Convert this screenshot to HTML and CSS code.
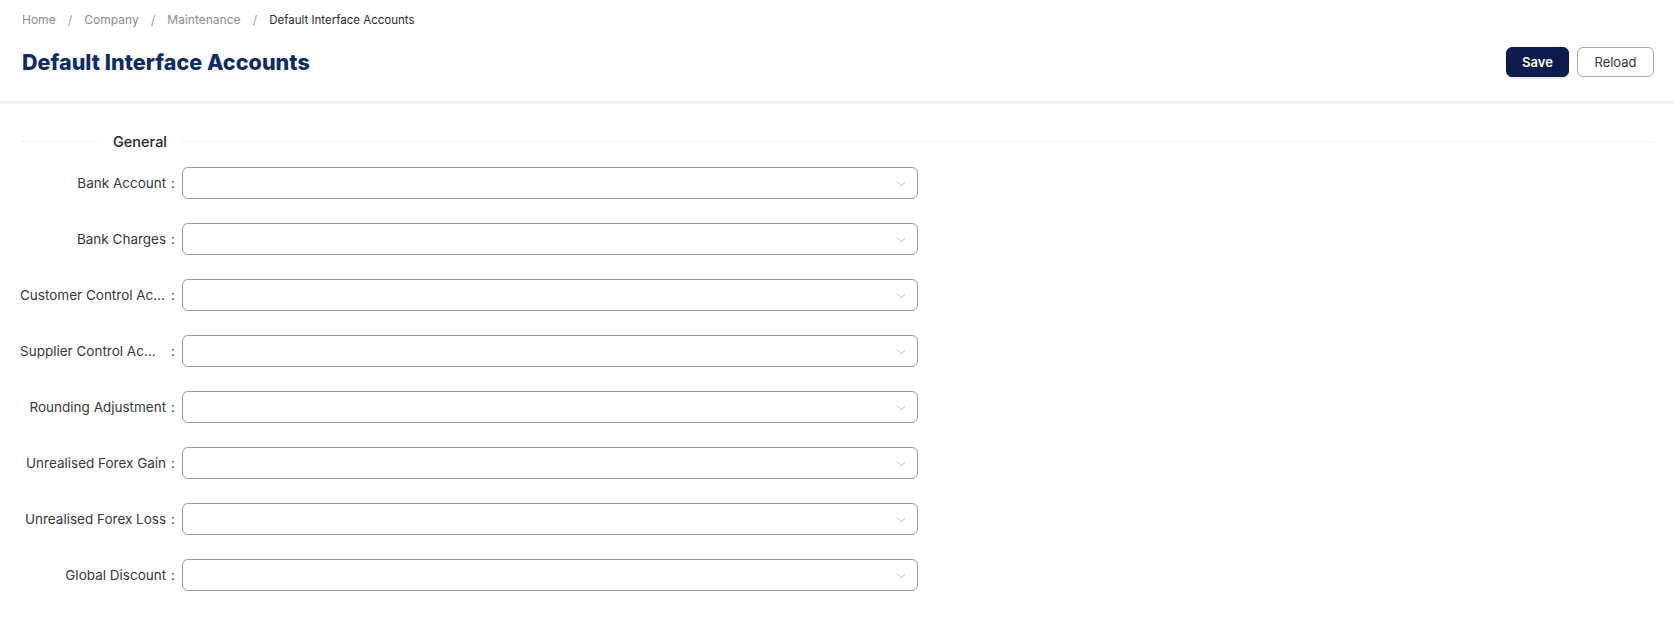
FILE: index.html
```html
<!DOCTYPE html>
<html lang="en">
<head>
<meta charset="utf-8">
<title>Default Interface Accounts</title>
<link rel="stylesheet" href="styles.css">
</head>
<body>
<div class="page">
  <header class="page-header">
    <nav class="breadcrumb">
      <a class="crumb">Home</a><span class="sep">/</span>
      <a class="crumb">Company</a><span class="sep">/</span>
      <a class="crumb">Maintenance</a><span class="sep">/</span>
      <span class="crumb current">Default Interface Accounts</span>
    </nav>
    <div class="title-row">
      <h1 class="title">Default Interface Accounts</h1>
      <div class="actions">
        <button class="btn btn-primary">Save</button>
        <button class="btn btn-default">Reload</button>
      </div>
    </div>
  </header>

  <main class="content">
    <div class="divider">
      <span class="divider-line left"></span>
      <span class="divider-text">General</span>
      <span class="divider-line right"></span>
    </div>

    <form class="form">
      <div class="form-item"><label class="form-label"><span class="label-text">Bank Account</span><span class="colon">:</span></label><div class="select"><span class="arrow"><svg viewBox="0 0 12 12" width="11" height="11"><path d="M1.5 4l4.5 4.5L10.5 4" fill="none" stroke="currentColor" stroke-width="1"/></svg></span></div></div>
      <div class="form-item"><label class="form-label"><span class="label-text">Bank Charges</span><span class="colon">:</span></label><div class="select"><span class="arrow"><svg viewBox="0 0 12 12" width="11" height="11"><path d="M1.5 4l4.5 4.5L10.5 4" fill="none" stroke="currentColor" stroke-width="1"/></svg></span></div></div>
      <div class="form-item"><label class="form-label"><span class="label-text">Customer Control Account</span><span class="colon">:</span></label><div class="select"><span class="arrow"><svg viewBox="0 0 12 12" width="11" height="11"><path d="M1.5 4l4.5 4.5L10.5 4" fill="none" stroke="currentColor" stroke-width="1"/></svg></span></div></div>
      <div class="form-item"><label class="form-label"><span class="label-text">Supplier Control Account</span><span class="colon wide">:</span></label><div class="select"><span class="arrow"><svg viewBox="0 0 12 12" width="11" height="11"><path d="M1.5 4l4.5 4.5L10.5 4" fill="none" stroke="currentColor" stroke-width="1"/></svg></span></div></div>
      <div class="form-item"><label class="form-label"><span class="label-text">Rounding Adjustment</span><span class="colon">:</span></label><div class="select"><span class="arrow"><svg viewBox="0 0 12 12" width="11" height="11"><path d="M1.5 4l4.5 4.5L10.5 4" fill="none" stroke="currentColor" stroke-width="1"/></svg></span></div></div>
      <div class="form-item"><label class="form-label"><span class="label-text">Unrealised Forex Gain</span><span class="colon">:</span></label><div class="select"><span class="arrow"><svg viewBox="0 0 12 12" width="11" height="11"><path d="M1.5 4l4.5 4.5L10.5 4" fill="none" stroke="currentColor" stroke-width="1"/></svg></span></div></div>
      <div class="form-item"><label class="form-label"><span class="label-text">Unrealised Forex Loss</span><span class="colon">:</span></label><div class="select"><span class="arrow"><svg viewBox="0 0 12 12" width="11" height="11"><path d="M1.5 4l4.5 4.5L10.5 4" fill="none" stroke="currentColor" stroke-width="1"/></svg></span></div></div>
      <div class="form-item"><label class="form-label"><span class="label-text">Global Discount</span><span class="colon">:</span></label><div class="select"><span class="arrow"><svg viewBox="0 0 12 12" width="11" height="11"><path d="M1.5 4l4.5 4.5L10.5 4" fill="none" stroke="currentColor" stroke-width="1"/></svg></span></div></div>
    </form>
  </main>
</div>
</body>
</html>
```

FILE: styles.css
```css
* { box-sizing: border-box; }

html, body {
  margin: 0;
  padding: 0;
  background: #ffffff;
  font-family: "Inter", "Open Sans", "Liberation Sans", sans-serif;
  color: #333333;
}

.page-header {
  padding: 9px 20px 0 22px;
  border-bottom: 3px solid #f0f0f0;
}

.breadcrumb {
  display: flex;
  align-items: center;
  height: 22px;
  font-size: 12px;
  line-height: 22px;
}

.crumb {
  color: #8c8c8c;
  text-decoration: none;
}

.crumb.current {
  color: #2b2b2b;
  font-size: 11.5px;
}

.sep {
  color: #a6a6a6;
  margin: 0 12px;
  font-size: 13px;
}

.title-row {
  display: flex;
  align-items: center;
  justify-content: space-between;
  height: 36px;
  margin-top: 13px;
  margin-bottom: 21px;
}

.title {
  margin: 0;
  font-size: 21.5px;
  font-weight: 800;
  color: #0d2b6b;
  letter-spacing: 0.05px;
}

.actions {
  display: flex;
  gap: 8px;
}

.btn {
  height: 30px;
  border-radius: 6px;
  font-family: inherit;
  font-size: 13px;
  padding: 0;
  cursor: pointer;
}

.btn-primary {
  width: 63px;
  background: #0b1b4d;
  border: 1px solid #0b1b4d;
  color: #ffffff;
  font-weight: 600;
  box-shadow: 0 2px 0 rgba(5, 20, 60, 0.08);
}

.btn-default {
  width: 77px;
  background: #ffffff;
  border: 1px solid #a8a8a8;
  color: #333333;
}

.content {
  padding: 26px 20px 0 20px;
}

.divider {
  display: flex;
  align-items: center;
  height: 22px;
  margin-bottom: 15px;
}

.divider-line {
  height: 1px;
  background: #f2f2f2;
}

.divider-line.left {
  width: 79px;
}

.divider-line.right {
  flex: 1;
}

.divider-text {
  padding: 0 14px;
  font-size: 14.5px;
  font-weight: 500;
  color: #262626;
}

.form {
  display: flex;
  flex-direction: column;
  gap: 24px;
}

.form-item {
  display: flex;
  align-items: center;
  height: 32px;
}

.form-label {
  width: 162px;
  display: flex;
  justify-content: flex-end;
  align-items: center;
  padding-right: 7px;
  font-size: 13.5px;
  color: #383838;
  white-space: nowrap;
  overflow: hidden;
}

.label-text {
  overflow: hidden;
  text-overflow: ellipsis;
  white-space: nowrap;
}

.colon {
  margin-left: 5px;
}

.colon.wide {
  margin-left: 9px;
}

.select {
  width: 736px;
  height: 32px;
  border: 1px solid #9a9a9a;
  border-radius: 6px;
  display: flex;
  align-items: center;
  justify-content: flex-end;
  padding-right: 10px;
}

.arrow {
  display: flex;
  color: #bdbdbd;
}
```
